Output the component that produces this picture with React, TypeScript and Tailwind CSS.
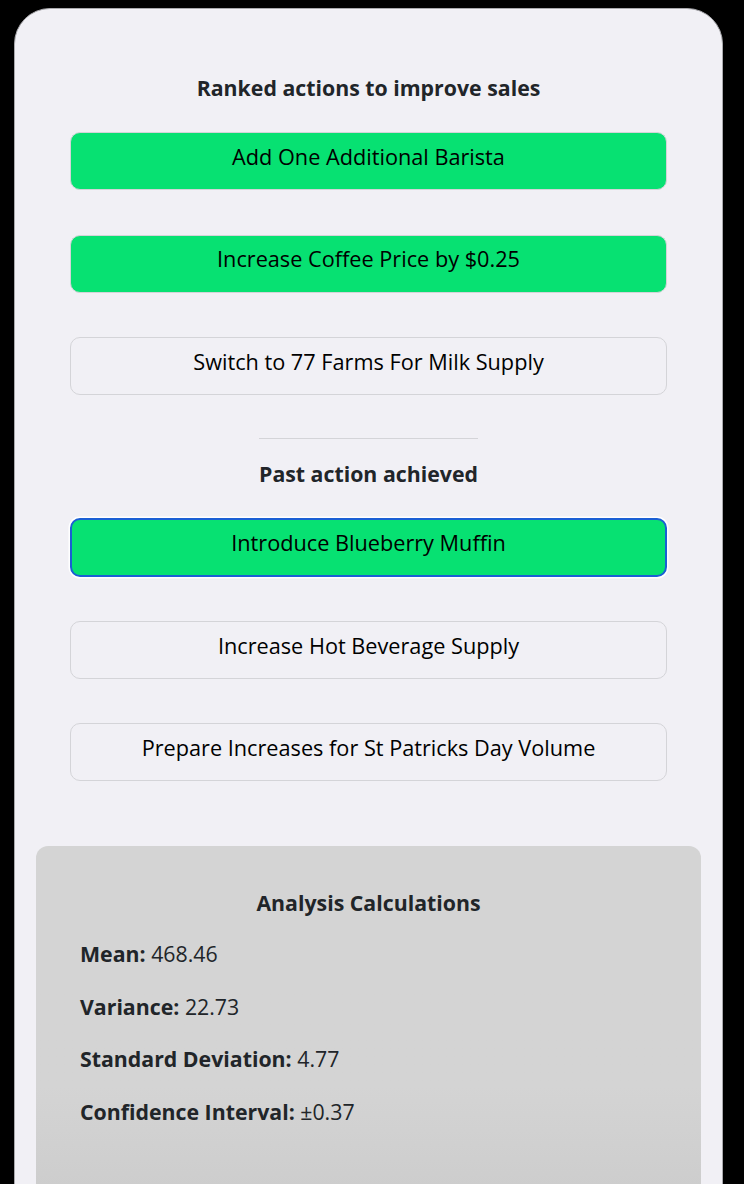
import React from "react";

const ranked = [
  { label: "Add One Additional Barista", active: true },
  { label: "Increase Coffee Price by $0.25", active: true },
  { label: "Switch to 77 Farms For Milk Supply", active: false },
];

const past = [
  { label: "Introduce Blueberry Muffin", active: true, focus: true },
  { label: "Increase Hot Beverage Supply", active: false },
  { label: "Prepare Increases for St Patricks Day Volume", active: false },
];

function ActionButton({ label, active, focus }: { label: string; active: boolean; focus?: boolean }) {
  if (focus) {
    return (
      <button className="w-full h-[59px] pb-[9px] rounded-[10px] border-2 border-[#1b5fd4] bg-[#07e172] shadow-[0_0_0_1.5px_#ffffff] text-[21.7px] leading-[28px] text-black">
        {label}
      </button>
    );
  }
  return (
    <button
      className={
        active
          ? "w-full h-[58px] pb-[9px] rounded-[10px] border border-[#d4d4d8] bg-[#07e172] text-[21.7px] leading-[28px] text-black"
          : "w-full h-[58px] pb-[9px] rounded-[10px] border border-[#d4d4d8] bg-[#f1f0f5] text-[21.7px] leading-[28px] text-black"
      }
    >
      {label}
    </button>
  );
}

export default function App() {
  return (
    <div
      className="min-h-[1184px] h-[1184px] overflow-hidden bg-black pt-[8px] px-[14px]"
      style={{ fontFamily: '"Open Sans", "Noto Sans", sans-serif' }}
    >
      <div className="w-[709px] h-[1220px] rounded-t-[36px] border border-[#a9a9ad] bg-[#f1f0f5] pt-[65px] px-[21px]">
        <h2 className="text-center text-[21.3px] leading-[28px] font-bold text-[#212529]">
          Ranked actions to improve sales
        </h2>
        <div className="mt-[30px] px-[34px] flex flex-col gap-[44.5px]">
          {ranked.map((r) => (
            <ActionButton key={r.label} label={r.label} active={r.active} />
          ))}
        </div>
        <div className="mt-[43px] flex justify-center">
          <div className="w-[219px] h-px bg-[#d4d4d8]" />
        </div>
        <h2 className="mt-[21px] text-center text-[21.3px] leading-[28px] font-bold text-[#212529]">
          Past action achieved
        </h2>
        <div className="mt-[30px] px-[34px] flex flex-col gap-[44px]">
          {past.map((r) => (
            <ActionButton key={r.label} label={r.label} active={r.active} focus={r.focus} />
          ))}
        </div>
        <div className="mt-[65px] rounded-[12px] bg-gradient-to-b from-[#d4d4d4] from-60% to-[#c9c9c9] h-[400px] pt-[43px] px-[44px] text-[#212529]">
          <h3 className="text-center text-[21.3px] leading-[28px] font-bold">Analysis Calculations</h3>
          <div className="mt-[23px] flex flex-col gap-[24.5px] text-[21.3px] leading-[28px]">
            <p>
              <span className="font-bold">Mean:</span> 468.46
            </p>
            <p>
              <span className="font-bold">Variance:</span> 22.73
            </p>
            <p>
              <span className="font-bold">Standard Deviation:</span> 4.77
            </p>
            <p>
              <span className="font-bold">Confidence Interval:</span> ±0.37
            </p>
          </div>
        </div>
      </div>
    </div>
  );
}
